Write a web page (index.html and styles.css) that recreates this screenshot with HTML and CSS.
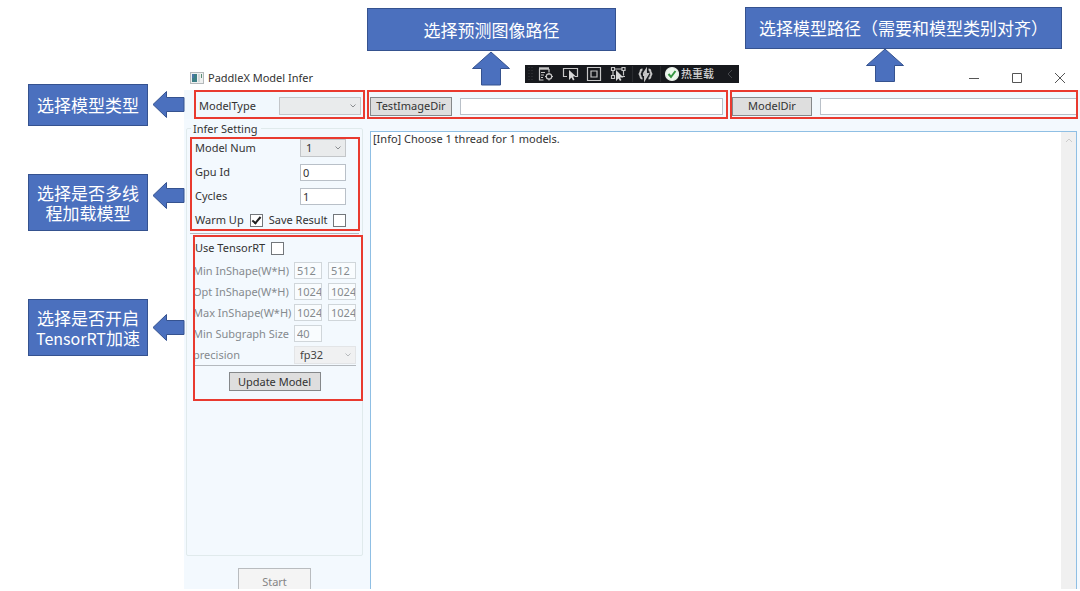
FILE: index.html
```html
<!DOCTYPE html>
<html lang="zh-CN">
<head>
<meta charset="utf-8">
<title>PaddleX Model Infer</title>
<link rel="stylesheet" href="styles.css">
</head>
<body>
<main class="window">
  <header class="titlebar">
    <svg class="app-icon" width="14" height="12" viewBox="0 0 14 12"><rect x=".5" y=".5" width="13" height="11" fill="#eef0f0" stroke="#b4b9bb"/><rect x="2" y="2" width="5" height="8" fill="#3d7f86"/><rect x="2" y="2" width="2" height="4" fill="#4a75a8"/><rect x="8" y="2" width="2" height="8" fill="#d3d8d8"/><rect x="11" y="2" width="1" height="4" fill="#5b8d74"/></svg>
    <h1 class="title">PaddleX Model Infer</h1>
    <div class="window-buttons">
      <button class="window-button" aria-label="Minimize"><svg width="12" height="12" viewBox="0 0 12 12"><path d="M1 6.5h10"/></svg></button>
      <button class="window-button" aria-label="Maximize"><svg width="12" height="12" viewBox="0 0 12 12"><path d="M1.5 1.5h9v9h-9z"/></svg></button>
      <button class="window-button" aria-label="Close"><svg width="12" height="12" viewBox="0 0 12 12"><path d="M1 1l10 10M11 1L1 11"/></svg></button>
    </div>
  </header>

  <div class="toolbar">
    <div class="group group-type">
      <label for="model-type">ModelType</label>
      <span class="select select-type"><select id="model-type"><option></option></select><svg class="chevron" width="6" height="4" viewBox="0 0 6 4"><path d="M.5.5L3 3 5.5.5"/></svg></span>
    </div>
    <div class="group">
      <button class="button image-button">TestImageDir</button>
      <input class="path" type="text" aria-label="TestImageDir">
    </div>
    <div class="group group-model">
      <button class="button model-button">ModelDir</button>
      <input class="path" type="text" aria-label="ModelDir">
    </div>
  </div>

  <div class="content">
    <div class="sidebar">
      <fieldset class="settings">
        <legend>Infer Setting</legend>
        <div class="section general">
          <div class="row"><label for="num">Model Num</label><span class="select"><select id="num"><option>1</option></select><svg class="chevron" width="6" height="4" viewBox="0 0 6 4"><path d="M.5.5L3 3 5.5.5"/></svg></span></div>
          <div class="row"><label for="gpu">Gpu Id</label><input id="gpu" type="text" value="0"></div>
          <div class="row"><label for="cycles">Cycles</label><input id="cycles" type="text" value="1"></div>
          <div class="checks"><label for="warm">Warm Up</label><input id="warm" type="checkbox" checked><label for="save">Save Result</label><input id="save" type="checkbox"></div>
        </div>
        <div class="section tensor">
          <div class="checks"><label for="trt">Use TensorRT</label><input id="trt" type="checkbox"></div>
          <div class="shapes">
            <label for="min">Min InShape(W*H)</label><input id="min" type="text" value="512" disabled><input type="text" value="512" aria-label="Min height" disabled>
            <label for="opt">Opt InShape(W*H)</label><input id="opt" type="text" value="1024" disabled><input type="text" value="1024" aria-label="Opt height" disabled>
            <label for="max">Max InShape(W*H)</label><input id="max" type="text" value="1024" disabled><input type="text" value="1024" aria-label="Max height" disabled>
            <label for="sub">Min Subgraph Size</label><input id="sub" type="text" value="40" disabled><span></span>
            <label for="precision">precision</label><span class="select select-precision"><select id="precision" disabled><option>fp32</option></select><svg class="chevron" width="6" height="4" viewBox="0 0 6 4"><path d="M.5.5L3 3 5.5.5"/></svg></span>
          </div>
          <div class="update"><button class="button update-button">Update Model</button></div>
        </div>
      </fieldset>
      <div class="start-area"><button class="start-button" disabled>Start</button></div>
    </div>
    <div class="log">
      <textarea class="log-text" aria-label="Log" readonly>[Info] Choose 1 thread for 1 models.</textarea>
      <div class="scrollbar"><svg width="8" height="5" viewBox="0 0 8 5"><path d="M1 4l3-3 3 3"/></svg></div>
    </div>
  </div>
</main>

<div class="debugbar">
  <svg width="154" height="18" viewBox="0 0 154 18" fill="none" stroke="#c6c6c6" stroke-width="1.2">
    <path d="M4 2v14M7 2v14" stroke="#34363a" stroke-dasharray="1 2"/>
    <path d="M14 3.5h10" stroke-width="2.4"/><path d="M14.5 4v11h4M16 7.5h4M16 10h3M16 12.500h2M24 4v3"/><circle cx="24" cy="11.500" r="2.700"/><path d="M24 7.500v2M24 13.500v2M20 11.500h2M26 11.500h2"/>
    <path d="M42 11.500h-3.500v-8h14v8H50"/><path d="M44 5v10l2.500-2.500 1.500 3 1.500-1-1.500-3h3z" fill="#d8d8d8" stroke="none"/>
    <path d="M62.500 2.500h13v13h-13zM66 6h6v6h-6z"/>
    <path d="M89 4h8M88 5.500v5M98.500 5.500v5M86.500 2.500h3v3h-3zM97 2.500h3v3h-3zM86.500 10.500h3v3h-3zM97 11.500h3"/><path d="M91 5v11l2.500-2.500 1.500 2.500 1.500-1-1.500-2.500h3.500z" fill="#d8d8d8" stroke="none"/>
    <path d="M107.500 1v16" stroke="#292b2f"/>
    <path d="M117.500 4.500q-2 0-2 2.500l-1 2 1 2q0 2.500 2 2.500M123.500 4.500q2 0 2 2.500l1 2-1 2q0 2.500-2 2.500M118.500 9l2.500-4v4h2l-3 5v-4h-2" stroke-width="1.900"/>
    <path d="M135.500 1v16" stroke="#292b2f"/>
    <circle cx="147" cy="9" r="6.500" fill="#eef8ee" stroke="#e8eee8"/><path d="M143.500 9l2.500 3 4.500-6" stroke="#369642" stroke-width="2"/>
  </svg>
  <span class="debug-label">热重载</span>
  <svg class="debug-arrow" width="6" height="10" viewBox="0 0 6 10" fill="none" stroke="#45474b"><path d="M5 1L1 5l4 4"/></svg>
</div>

<p class="callout callout-image">选择预测图像路径</p>
<p class="callout callout-dir">选择模型路径（需要和模型类别对齐）</p>
<p class="callout callout-type">选择模型类型</p>
<p class="callout callout-thread">选择是否多线<br>程加载模型</p>
<p class="callout callout-rt"><span>选择是否开启<br><span class="latin">TensorRT</span>加速</span></p>

<svg class="arrow arrow-image" width="40" height="35" viewBox="0 0 40 35"><path d="M20 1L38.500 17.500H29.500V34H10.500V17.500H1.500z"/></svg>
<svg class="arrow arrow-dir" width="40" height="35" viewBox="0 0 40 35"><path d="M20 1L38.500 17.500H29.500V33.500H10.500V17.500H1.500z"/></svg>
<svg class="arrow arrow-type" width="33" height="29" viewBox="0 0 33 29"><path d="M1 14.500L14.500 1.500V7.500H32V21.500H14.500V27.500z"/></svg>
<svg class="arrow arrow-thread" width="33" height="29" viewBox="0 0 33 29"><path d="M1 14.500L14.500 1.500V7.500H32V21.500H14.500V27.500z"/></svg>
<svg class="arrow arrow-rt" width="33" height="29" viewBox="0 0 33 29"><path d="M1 14.500L14.500 1.500V7.500H32V21.500H14.500V27.500z"/></svg>
</body>
</html>
```
FILE: styles.css
```css
*, *::before, *::after { box-sizing: border-box; }
body {
  margin: 0;
  position: relative;
  background: #fff;
  overflow: hidden;
  color: #333;
  font: 11px/16px "Noto Sans", "Noto Sans CJK SC", sans-serif;
}
input, select, button, textarea { font: inherit; color: inherit; margin: 0; }

.window {
  display: flex;
  flex-direction: column;
  height: calc(100vh - 2px);
  margin-left: 184px;
  padding-top: 66px;
  overflow: hidden;
}
.titlebar { display: flex; align-items: center; height: 24px; padding-left: 6px; flex: none; }
.title { margin: 0 0 0 4px; font-size: 11px; font-weight: 400; }
.window-buttons { display: flex; gap: 31px; margin-left: auto; padding-right: 14px; }
.window-button { display: flex; padding: 0; border: 0; background: none; }
.window-button svg { fill: none; stroke: #555; }

.toolbar {
  display: grid;
  grid-template-columns: 171px 361px minmax(0, 1fr);
  gap: 2px;
  padding: 0 2px 0 10px;
  background: #f1f8fd;
  flex: none;
}
.group { display: flex; align-items: center; height: 29px; border: 2px solid #e93a2f; padding: 3px 3px 0 1px; gap: 8px; }
.group-type { justify-content: space-between; padding-left: 3px; padding-right: 2px; }
.group-model { padding-left: 0; padding-right: 0; }
.button { height: 19px; padding: 0; border: 1px solid #85888a; background: #dedede; line-height: 16px; }
.image-button { width: 82px; flex: none; }
.model-button { width: 80px; flex: none; }
input[type="text"] { border: 1px solid #b9c0c8; background: #fff; outline: 0; border-radius: 0; height: 17px; padding: 0 2px; min-width: 0; }
.path { flex: 1; }
.group-model .path { border-right: 0; }

.select { position: relative; display: flex; width: 46px; }
.select select { appearance: none; width: 100%; height: 18px; padding: 0 5px; border: 1px solid #c3c6c9; border-radius: 0; background: #e9ebec; }
.select-type { width: 82px; }
.chevron { position: absolute; right: 5px; top: 7px; fill: none; stroke: #8a8d90; pointer-events: none; }

.content { display: flex; flex: 1; min-height: 0; background: #f3f9fe; padding: 0 3px 0 2px; gap: 7px; }
.sidebar { display: flex; flex-direction: column; width: 177px; flex: none; padding-top: 2px; }
.settings { flex: 1; min-width: 0; min-height: 0; margin: 0; border: 1px solid #e0eaec; border-radius: 2px; padding: 0 3px; }
legend { margin-left: 1px; padding: 0 3px 0 2px; line-height: 15px; }
.section { position: relative; border-bottom: 1px solid #b4b9be; }
.section::after { content: ""; position: absolute; border: 2px solid #e93a2f; pointer-events: none; }
.general { padding: 0 13px 1px 5px; }
.general::after { inset: 1px -1px 2px 0; }
.row { display: grid; grid-template-columns: 1fr 46px; align-items: center; height: 24px; }
.checks { display: flex; align-items: center; gap: 6px; height: 24px; white-space: nowrap; }
input[type="checkbox"] {
  appearance: none; flex: none; width: 13px; height: 13px;
  border: 1px solid #73777b; background: #fff; display: grid; place-items: center;
}
input[type="checkbox"]:checked::before { content: ""; width: 5px; height: 9px; margin-bottom: 2px; border: solid #222; border-width: 0 2px 2px 0; transform: rotate(40deg); }
.tensor { border: 0; padding: 2px 3px 0; }
.tensor::after { inset: 1px -4px -10px 3px; }
.tensor .checks { padding-left: 2px; }
.shapes {
  display: grid; grid-template-columns: 95px 28px 28px; grid-auto-rows: 21px;
  align-items: center; column-gap: 6px; color: #858a8e; white-space: nowrap;
  border-bottom: 1px solid #b4b9be;
}
.shapes input[type="text"] { background: #f9fcfe; border-color: #d0d6da; padding: 0 0 0 2px; }
.select-precision { grid-column: 2 / 4; width: 100%; }
.select-precision select { border-color: #e3e5e7; background: #f0f1f2; color: #444; opacity: 1; }
.select-precision .chevron { stroke: #b7babd; }
.update { display: flex; justify-content: center; padding-top: 6px; }
.update-button { width: 92px; }
.start-area { display: flex; justify-content: center; align-items: flex-start; height: 33px; padding-top: 12px; overflow: hidden; flex: none; }
.start-button { width: 73px; height: 28px; flex: none; border: 1px solid #b9bcbf; background: #f4f4f4; color: #858585; padding: 0; }

.log { display: flex; flex: 1; min-width: 0; margin-top: 12px; border: 1px solid #8fbfe4; border-bottom: 0; background: #fff; }
.log-text { flex: 1; min-width: 0; padding: 0 2px; border: 0; outline: 0; resize: none; background: #fff; overflow: hidden; line-height: 14px; }
.scrollbar { width: 15px; background: #f0f0f0; display: flex; justify-content: center; padding-top: 6px; }
.scrollbar svg { fill: none; stroke: #cdcdcd; }

.debugbar { position: absolute; left: 525px; top: 65px; width: 214px; height: 18px; display: flex; align-items: center; background: #17191d; color: #d2d2d2; }
.debug-label { margin-left: 2px; font: 500 11px/16px "Noto Sans CJK SC", sans-serif; padding-bottom: 2px; }
.debug-arrow { margin-left: auto; margin-right: 6px; }

.callout {
  position: absolute; display: flex; align-items: center; justify-content: center;
  margin: 0; border: 1px solid #35528f; background: #4b70be; color: #fff;
  font: 17px/20px "Noto Sans CJK SC", sans-serif; text-align: center; white-space: nowrap;
}
.latin { font-size: 16px; }
.callout-image { left: 367px; top: 8px; width: 249px; height: 43px; }
.callout-dir { left: 745px; top: 7px; width: 317px; height: 42px; }
.callout-type { left: 28px; top: 84px; width: 120px; height: 42px; }
.callout-thread { left: 28px; top: 174px; width: 120px; height: 57px; }
.callout-rt { left: 28px; top: 299px; width: 120px; height: 57px; }
.arrow { position: absolute; fill: #4b70be; stroke: #35528f; }
.arrow-image { left: 471px; top: 51px; }
.arrow-dir { left: 865px; top: 48px; }
.arrow-type { left: 152px; top: 90px; }
.arrow-thread { left: 152px; top: 181px; }
.arrow-rt { left: 152px; top: 313px; }
```
